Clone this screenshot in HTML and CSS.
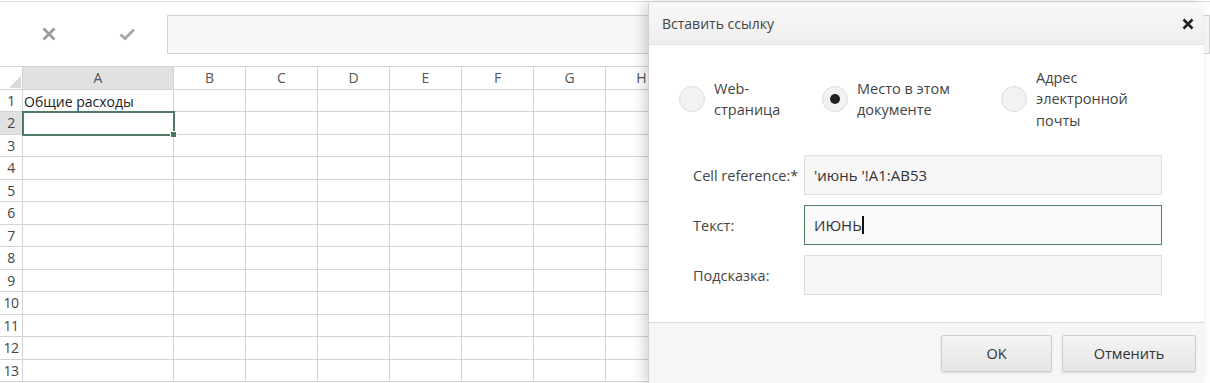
FILE: index.html
```html
<!DOCTYPE html>
<html lang="ru">
<head>
<meta charset="UTF-8" />
<title>Вставить ссылку</title>
<link rel="stylesheet" href="styles.css">
</head>
<body>
  <div id="toolbar">
    <div class="tb-btn">
      <svg width="16" height="16" viewBox="0 0 16 16"><path d="M2.5 2.5 L13.5 13.5 M13.5 2.5 L2.5 13.5" stroke="#9a9a9a" stroke-width="2.8" fill="none"/></svg>
    </div>
    <div class="tb-btn">
      <svg width="17" height="14" viewBox="0 0 17 14"><path d="M1.5 7.5 L6 11.5 L15 2.5" stroke="#a8a8a8" stroke-width="2.8" fill="none"/></svg>
    </div>
    <div id="formula"></div>
  </div>

  <div id="sheet"></div>

  <div id="dialog">
    <div class="dlg-head">
      <span>Вставить ссылку</span>
      <svg class="dlg-close" width="12" height="12" viewBox="0 0 12 12"><path d="M1.5 1.5 L10.5 10.5 M10.5 1.5 L1.5 10.5" stroke="#222" stroke-width="2.6" fill="none"/></svg>
    </div>
    <div class="dlg-body">
      <div class="radio-row">
        <div class="radio-item w1">
          <span class="radio"></span>
          <span class="radio-label">Web-<br>страница</span>
        </div>
        <div class="radio-item w2">
          <span class="radio checked"></span>
          <span class="radio-label">Место в этом<br>документе</span>
        </div>
        <div class="radio-item">
          <span class="radio"></span>
          <span class="radio-label">Адрес<br>электронной<br>почты</span>
        </div>
      </div>
      <div class="form">
        <div class="form-label">Cell reference:*</div>
        <div class="field">'июнь '!A1:AB53</div>
        <div class="form-label">Текст:</div>
        <div class="field active">ИЮНЬ<span class="caret"></span></div>
        <div class="form-label">Подсказка:</div>
        <div class="field"></div>
      </div>
    </div>
    <div class="dlg-foot">
      <button class="btn ok">OK</button>
      <button class="btn cancel">Отменить</button>
    </div>
  </div>

<script>
const columns = ['A', 'B', 'C', 'D', 'E', 'F', 'G', 'H', 'I'];
const sheet = document.getElementById('sheet');

function addCell(cls, text) {
  const div = document.createElement('div');
  div.className = cls;
  if (text) div.textContent = text;
  sheet.appendChild(div);
  return div;
}

addCell('corner');
columns.forEach(c => {
  addCell(c === 'A' ? 'col-head active' : 'col-head', c);
});

for (let r = 1; r <= 13; r++) {
  addCell(r === 2 ? 'row-head active' : 'row-head', r);
  columns.forEach(c => {
    let cls = 'cell';
    if (c === 'A' && r === 2) cls += ' selected';
    addCell(cls, c === 'A' && r === 1 ? 'Общие расходы' : '');
  });
}
</script>
</body>
</html>
```

FILE: styles.css
```css
body {
  margin: 0;
  font-family: 'Open Sans', 'Noto Sans', sans-serif;
  color: #333;
  background: #fff;
  overflow: hidden;
  position: relative;
  height: 383px;
}
#toolbar {
  margin-top: 1px;
  border-top: 1px solid #dedede;
  height: 64px;
  display: flex;
  align-items: center;
  padding-left: 9px;
}
.tb-btn {
  width: 79px;
  display: flex;
  justify-content: center;
  align-items: center;
}
#formula {
  flex: 1;
  height: 37px;
  border: 1px solid #d2d2d2;
  background: #f8f8f8;
  margin-top: 1px;
}
#sheet {
  display: grid;
  grid-template-columns: 22px 150px repeat(8, 71px);
  grid-auto-rows: 21.5px;
  gap: 1px;
  padding: 1px 0;
  background: #d4d4d4;
  width: max-content;
}
#sheet > div {
  background: #fff;
}
.corner {
  position: relative;
}
.corner::after {
  content: '';
  position: absolute;
  right: 1px;
  bottom: 1px;
  border-left: 12px solid transparent;
  border-bottom: 12px solid #dadada;
}
.col-head {
  font-size: 14px;
  color: #555;
  text-align: center;
  line-height: 21.5px;
}
#sheet > .col-head.active,
#sheet > .row-head.active {
  background: #e1e1e1;
}
.row-head {
  font-size: 14px;
  color: #444;
  text-align: center;
  line-height: 21.5px;
  letter-spacing: -0.5px;
}
.cell {
  font-size: 14px;
  color: #222;
  line-height: 24px;
  padding-left: 1px;
  white-space: nowrap;
}
.cell.selected {
  position: relative;
}
.cell.selected::before {
  content: '';
  position: absolute;
  left: -1px;
  top: -1px;
  right: -2px;
  bottom: -2px;
  border: 2px solid #4d7a63;
}
.cell.selected::after {
  content: '';
  position: absolute;
  right: -4px;
  bottom: -4px;
  width: 5px;
  height: 5px;
  background: #4d7a63;
  border: 1px solid #fff;
}

/* dialog */
#dialog {
  position: absolute;
  left: 648px;
  top: 3px;
  bottom: 0;
  width: 555px;
  background: #fff;
  border-left: 1px solid #d0d0d0;
  box-shadow: -5px 0 12px rgba(0, 0, 0, 0.16);
  display: flex;
  flex-direction: column;
}
.dlg-head {
  height: 41px;
  border-bottom: 1px solid #e2e2e2;
  background: linear-gradient(#f8f8f8, #eeeeee);
  display: flex;
  align-items: center;
  justify-content: space-between;
  padding: 0 10px 0 13px;
  font-size: 14px;
  color: #444;
}
.dlg-body {
  height: 277px;
  padding-top: 22px;
  box-sizing: border-box;
}
.radio-row {
  display: flex;
  align-items: center;
  height: 64px;
  padding-left: 30px;
}
.radio-item {
  display: flex;
  align-items: center;
  gap: 9px;
}
.radio-item.w1 {
  width: 143px;
}
.radio-item.w2 {
  width: 179px;
}
.radio {
  width: 24px;
  height: 24px;
  border-radius: 50%;
  border: 1px solid #dcdcdc;
  background: #f2f2f2;
  display: flex;
  align-items: center;
  justify-content: center;
  flex-shrink: 0;
}
.radio.checked::after {
  content: '';
  width: 10px;
  height: 10px;
  border-radius: 50%;
  background: #222;
}
.radio-label {
  font-size: 14.5px;
  line-height: 21.5px;
  color: #444;
}
.form {
  margin-top: 24px;
  padding-left: 44px;
  display: grid;
  grid-template-columns: 111px 358px;
  grid-auto-rows: 40px;
  row-gap: 10px;
  align-items: center;
}
.form-label {
  font-size: 14.5px;
  color: #444;
  white-space: nowrap;
}
.field {
  height: 100%;
  box-sizing: border-box;
  border: 1px solid #dedede;
  background: #f7f7f7;
  padding-left: 9px;
  font-size: 15px;
  color: #333;
  display: flex;
  align-items: center;
}
.field.active {
  border-color: #517c66;
  background: #f9f9f9;
}
.caret {
  display: inline-block;
  width: 2px;
  height: 18px;
  background: #111;
}
.dlg-foot {
  flex: 1;
  border-top: 1px solid #d9d9d9;
  background: #f6f6f6;
  display: flex;
  justify-content: flex-end;
  align-items: flex-start;
  gap: 10px;
  padding: 12px 8px 0 0;
}
.btn {
  height: 37px;
  border: 1px solid #cfcfcf;
  border-radius: 2px;
  background: linear-gradient(#f4f4f4, #e5e5e5);
  box-shadow: 0 1px 2px rgba(0, 0, 0, 0.12);
  font-family: inherit;
  font-size: 14.5px;
  color: #333;
  cursor: pointer;
}
.btn.ok {
  width: 111px;
}
.btn.cancel {
  width: 134px;
}
```
